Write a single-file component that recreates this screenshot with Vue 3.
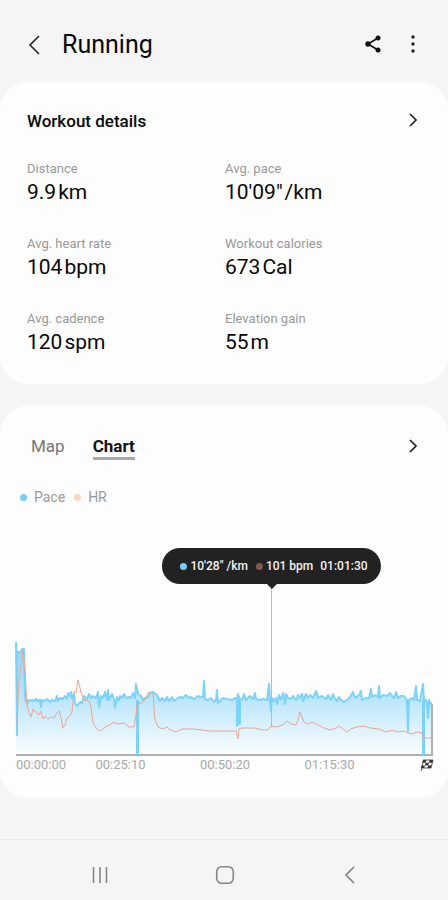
<template>
  <div class="workout-page">
    <header class="top-bar">
      <button type="button" class="icon-button" aria-label="Back">
        <svg width="14" height="22" viewBox="0 0 14 22">
          <path d="M12 2 L3 11 L12 20" fill="none" stroke="#222" stroke-width="1.6" />
        </svg>
      </button>
      <h1>Running</h1>
      <button type="button" class="icon-button" aria-label="Share">
        <svg width="18" height="20" viewBox="0 0 18 20">
          <path d="M14 3 L4 9 L14 15" fill="none" stroke="#111" stroke-width="1.6" />
          <circle cx="14" cy="3" r="2.5" fill="#111" />
          <circle cx="4" cy="9" r="2.7" fill="#111" />
          <circle cx="14" cy="15" r="2.5" fill="#111" />
        </svg>
      </button>
      <button type="button" class="icon-button" aria-label="More options">
        <svg width="6" height="20" viewBox="0 0 6 20">
          <circle cx="3" cy="2" r="1.7" fill="#222" />
          <circle cx="3" cy="9" r="1.7" fill="#222" />
          <circle cx="3" cy="16" r="1.7" fill="#222" />
        </svg>
      </button>
    </header>

    <main>
      <section class="card details-card">
        <div class="card-header">
          <h2>Workout details</h2>
          <button type="button" class="icon-button" aria-label="Open workout details">
            <svg width="10" height="16" viewBox="0 0 10 16">
              <path d="M2 2 L8 8 L2 14" fill="none" stroke="#222" stroke-width="1.7" />
            </svg>
          </button>
        </div>
        <dl class="stats">
          <div v-for="stat in stats" :key="stat.label" class="stat">
            <dt>{{ stat.label }}</dt>
            <dd><span>{{ stat.value }}</span><span>{{ stat.unit }}</span></dd>
          </div>
        </dl>
      </section>

      <section class="card chart-card">
        <div class="card-header">
          <div class="tabs">
            <button
              v-for="tab in tabs"
              :key="tab"
              type="button"
              class="tab"
              :class="{ active: tab === activeTab }"
              @click="activeTab = tab"
            >{{ tab }}</button>
          </div>
          <button type="button" class="icon-button" aria-label="Open chart">
            <svg width="10" height="16" viewBox="0 0 10 16">
              <path d="M2 2 L8 8 L2 14" fill="none" stroke="#222" stroke-width="1.7" />
            </svg>
          </button>
        </div>
        <div class="legend">
          <span class="legend-item"><i class="dot pace"></i>Pace</span>
          <span class="legend-item"><i class="dot hr"></i>HR</span>
        </div>

        <div class="chart">
          <svg class="plot" viewBox="0 0 420 236" preserveAspectRatio="none">
            <defs>
              <linearGradient id="pace-fill" gradientUnits="userSpaceOnUse" x1="0" y1="125" x2="0" y2="234">
                <stop offset="0" stop-color="#9ad3f0" />
                <stop offset="0.5" stop-color="#bce6fc" />
                <stop offset="1" stop-color="#fafdff" />
              </linearGradient>
            </defs>
            <polygon :points="paceArea" fill="url(#pace-fill)" />
            <path d="M2 235 H419" class="axis" />
            <path d="M418 184 V235" class="axis" />
            <polyline :points="paceLine" class="pace-line" />
            <path d="M123.5 180 V235 M409.5 180 V235" class="pace-drop" />
            <path d="M222 180 H227 V204 L222 207 Z" class="pace-block" />
            <polyline :points="hrLine" class="hr-line" />
            <path d="M257.5 64 V207" class="cursor-line" />
          </svg>
          <div class="tooltip">
            <i class="dot pace"></i>
            <span>10'28" /km</span>
            <i class="dot hr"></i>
            <span>101 bpm</span>
            <span class="time">01:01:30</span>
          </div>
        </div>
        <div class="time-axis">
          <span v-for="time in times" :key="time">{{ time }}</span>
          <svg width="14" height="12" viewBox="0 0 14 12" aria-label="Finish">
            <path d="M3 1 H13 L11 9 H2 M3.5 1 L1 12" fill="none" stroke="#333" stroke-width="0.8" />
            <path d="M3 1 h3.3 l-0.7 2.7 h-3.3 z M9.6 1 h3.3 l-0.7 2.7 h-3.3 z M5.6 3.7 h3.3 l-0.7 2.7 h-3.3 z M1.6 6.4 h3.3 l-0.7 2.7 h-3.3 z M8.2 6.4 h3.3 l-0.7 2.7 h-3.3 z" fill="#333" />
          </svg>
        </div>
      </section>
    </main>

    <nav class="system-nav">
      <button type="button" class="icon-button" aria-label="Recent apps">
        <svg width="18" height="18" viewBox="0 0 18 18">
          <path d="M2.5 1 V17 M9 1 V17 M15.5 1 V17" fill="none" stroke="#888" stroke-width="1.6" />
        </svg>
      </button>
      <button type="button" class="icon-button" aria-label="Home">
        <svg width="20" height="20" viewBox="0 0 20 20">
          <rect x="1.7" y="1.7" width="16.6" height="16.6" rx="5" fill="none" stroke="#858585" stroke-width="1.6" />
        </svg>
      </button>
      <button type="button" class="icon-button" aria-label="Back">
        <svg width="12" height="18" viewBox="0 0 12 18">
          <path d="M10 1 L2 9 L10 17" fill="none" stroke="#808080" stroke-width="1.6" />
        </svg>
      </button>
    </nav>
  </div>
</template>

<script setup>
import { ref } from 'vue';

const stats = [
  { label: 'Distance', value: '9.9', unit: 'km' },
  { label: 'Avg. pace', value: '10\'09"', unit: '/km' },
  { label: 'Avg. heart rate', value: '104', unit: 'bpm' },
  { label: 'Workout calories', value: '673', unit: 'Cal' },
  { label: 'Avg. cadence', value: '120', unit: 'spm' },
  { label: 'Elevation gain', value: '55', unit: 'm' },
];

const tabs = ['Map', 'Chart'];
const activeTab = ref('Chart');

const times = ['00:00:00', '00:25:10', '00:50:20', '01:15:30'];

const paceLine =
  '2,122 3,215 3,131 6,133 8,129 10,129 11,175 12,182 13,184 14,180 16,181 18,180 20,181 22,179 24,181 26,180 ' +
  '27,187 28,180 30,181 33,179 36,182 38,180 41,181 43,176 44,181 46,178 49,179 51,176 53,179 54,173 56,176 ' +
  '57,172 58,178 60,174 61,183 63,186 66,182 68,183 70,176 73,179 75,174 77,178 79,176 82,178 84,172 85,187 ' +
  '87,176 89,178 91,172 93,180 94,170 95,180 98,174 100,179 101,188 103,177 105,180 106,176 108,178 110,174 ' +
  '112,178 115,177 117,178 119,173 121,178 122,164 124,174 127,176 129,180 131,178 134,177 136,173 139,172 ' +
  '142,174 144,177 146,181 148,178 151,181 153,177 155,181 158,177 160,181 163,179 166,177 169,178 172,175 ' +
  '175,178 177,177 180,179 184,176 187,177 189,177 190,161 191,179 194,180 197,178 200,182 202,180 203,170 ' +
  '204,183 206,181 209,178 213,179 218,180 221,178 223,180 224,174 226,180 229,178 230,174 232,180 236,176 ' +
  '239,179 241,173 242,179 245,180 249,179 253,180 255,164 256,180 257,191 258,178 260,181 262,178 263,184 ' +
  '265,175 267,180 269,173 271,184 272,174 274,178 277,179 279,176 282,180 284,175 286,178 288,174 289,181 ' +
  '292,174 294,178 296,175 299,178 302,171 304,178 308,176 312,179 314,175 317,180 319,174 321,179 323,181 ' +
  '325,177 327,180 330,182 333,180 336,177 339,172 341,178 345,175 347,171 348,180 352,178 355,178 357,169 ' +
  '358,177 361,175 364,177 365,166 366,178 369,175 373,176 376,173 378,176 380,178 382,172 384,178 387,176 ' +
  '390,176 393,180 394,211 395,180 398,178 400,180 402,166 403,180 406,181 409,164 410,181 412,180 413,184 ' +
  '414,198 415,180 416,184 418,183';

const paceArea = `2,235 ${paceLine} 418,235`;

const hrLine =
  '3,204 5,160 8,140 9,130 11,150 13,185 15,193 17,197 19,189 22,192 25,195 27,191 29,199 31,196 34,199 37,197 ' +
  '40,198 42,194 45,191 47,198 49,208 51,205 53,198 56,196 58,192 60,171 62,173 64,160 67,172 70,180 75,181 ' +
  '77,187 79,203 83,209 87,211 91,207 96,205 99,202 103,204 110,203 115,207 120,207 122,195 123,184 128,183 ' +
  '131,180 134,173 137,172 139,174 141,200 144,207 149,209 153,207 157,210 162,212 168,209 180,209 196,211 ' +
  '222,211 224,219 225,209 228,208 240,208 249,210 254,210 257,206 264,207 270,204 273,201 277,204 282,205 ' +
  '284,200 286,192 290,202 294,204 298,202 304,205 310,208 316,210 322,208 325,206 329,209 333,212 337,209 ' +
  '342,207 350,206 356,208 365,209 372,212 378,210 384,212 390,211 397,214 404,212 408,213 409,218 417,218';
</script>

<style>
body {
  background: #f5f5f5;
}
</style>

<style scoped>
.workout-page,
.workout-page * {
  box-sizing: border-box;
}
.workout-page {
  min-height: 100vh;
  display: flex;
  flex-direction: column;
  background: #f5f5f5;
  color: #080808;
  font-family: Roboto, sans-serif;
}
button {
  margin: 0;
  padding: 0;
  border: 0;
  background: none;
  color: inherit;
  font-family: inherit;
  cursor: pointer;
}
h1,
h2,
dl,
dd {
  margin: 0;
}
svg {
  display: block;
}
.icon-button {
  display: flex;
  align-items: center;
  justify-content: center;
  min-width: 24px;
  height: 24px;
}
.top-bar {
  display: flex;
  align-items: center;
  gap: 16px;
  height: 82px;
  padding: 7px 23px 0 22px;
}
.top-bar h1 {
  flex: 1;
  font-size: 25px;
  line-height: 32px;
  font-weight: 400;
}
main {
  flex: 1;
}
.card {
  background: #fdfdfd;
  border-radius: 28px;
}
.card-header {
  display: flex;
  align-items: flex-start;
  justify-content: space-between;
  padding: 0 23px 0 27px;
}
.details-card {
  padding: 26px 0 27px;
  margin-bottom: 22px;
}
.card-header h2 {
  font-size: 17px;
  line-height: 26px;
  font-weight: 500;
}
.stats {
  display: grid;
  grid-template-columns: 1fr 1fr;
  column-gap: 2px;
  row-gap: 27px;
  padding: 25px 27px 0;
}
.stat dt {
  color: #999;
  font-size: 13px;
  line-height: 20px;
}
.stat dd {
  display: flex;
  gap: 2px;
  font-size: 21px;
  line-height: 28px;
  font-weight: 400;
  margin-top: -1px;
  padding-bottom: 1px;
}
.chart-card {
  padding: 28px 0 24px;
}
.tabs {
  display: flex;
  gap: 28px;
  padding-left: 4px;
}
.tab {
  height: 26px;
  border-bottom: 3px solid transparent;
  color: #777;
  font-size: 17px;
  line-height: 24px;
  font-weight: 400;
}
.tab.active {
  border-color: #aaa;
  color: #111;
  font-weight: 700;
}
.legend {
  display: flex;
  gap: 9px;
  padding: 27px 20px 0;
  color: #999;
  font-size: 14px;
  line-height: 20px;
}
.legend-item {
  display: flex;
  align-items: center;
  gap: 7px;
}
.dot {
  width: 7px;
  height: 7px;
  border-radius: 50%;
}
.dot.pace {
  background: #74cdfb;
}
.dot.hr {
  background: #ffd5bc;
}
.chart {
  position: relative;
  margin: 13px 14px 0;
}
.plot {
  width: 100%;
  height: 236px;
}
.plot path,
.plot polyline {
  fill: none;
  vector-effect: non-scaling-stroke;
}
.axis {
  stroke: #b0b0b0;
  stroke-width: 2;
}
.pace-line {
  stroke: #7bd2fa;
  stroke-width: 2;
  stroke-linejoin: round;
}
.pace-drop {
  stroke: #7bd2fa;
  stroke-width: 3;
}
.plot .pace-block {
  fill: #7bd2fa;
}
.hr-line {
  stroke: #efa58d;
  stroke-width: 1;
  stroke-linejoin: round;
}
.cursor-line {
  stroke: #bbb;
  stroke-width: 1;
}
/* centred over the selected moment of the run */
.tooltip {
  position: absolute;
  left: 61.3%;
  top: 28px;
  transform: translateX(-50%);
  display: flex;
  align-items: center;
  gap: 3px;
  height: 36px;
  padding: 0 13px 0 18px;
  border-radius: 18px;
  background: #222;
  color: #f2f2f2;
  font-size: 12px;
  font-weight: 500;
  white-space: nowrap;
}
.tooltip::after {
  content: "";
  position: absolute;
  left: 50%;
  top: 100%;
  margin-left: -5px;
  border: 5px solid transparent;
  border-top-color: #222;
  border-bottom: 0;
}
.tooltip .dot.hr {
  margin-left: 5px;
  background: #805b4b;
}
.tooltip .time {
  margin-left: 4px;
}
.time-axis {
  display: grid;
  grid-template-columns: 1fr 2fr 2fr 2fr 1fr;
  justify-items: center;
  align-items: center;
  padding: 0 14px 0 16px;
  color: #aaa;
  font-size: 13px;
  line-height: 18px;
}
.time-axis span:first-child {
  justify-self: start;
}
.time-axis svg {
  justify-self: end;
}
.system-nav {
  display: grid;
  grid-template-columns: repeat(3, 1fr);
  align-items: center;
  justify-items: center;
  height: 61px;
  padding: 10px 35px 0 37px;
  border-top: 1px solid #e9e9e9;
}
</style>
